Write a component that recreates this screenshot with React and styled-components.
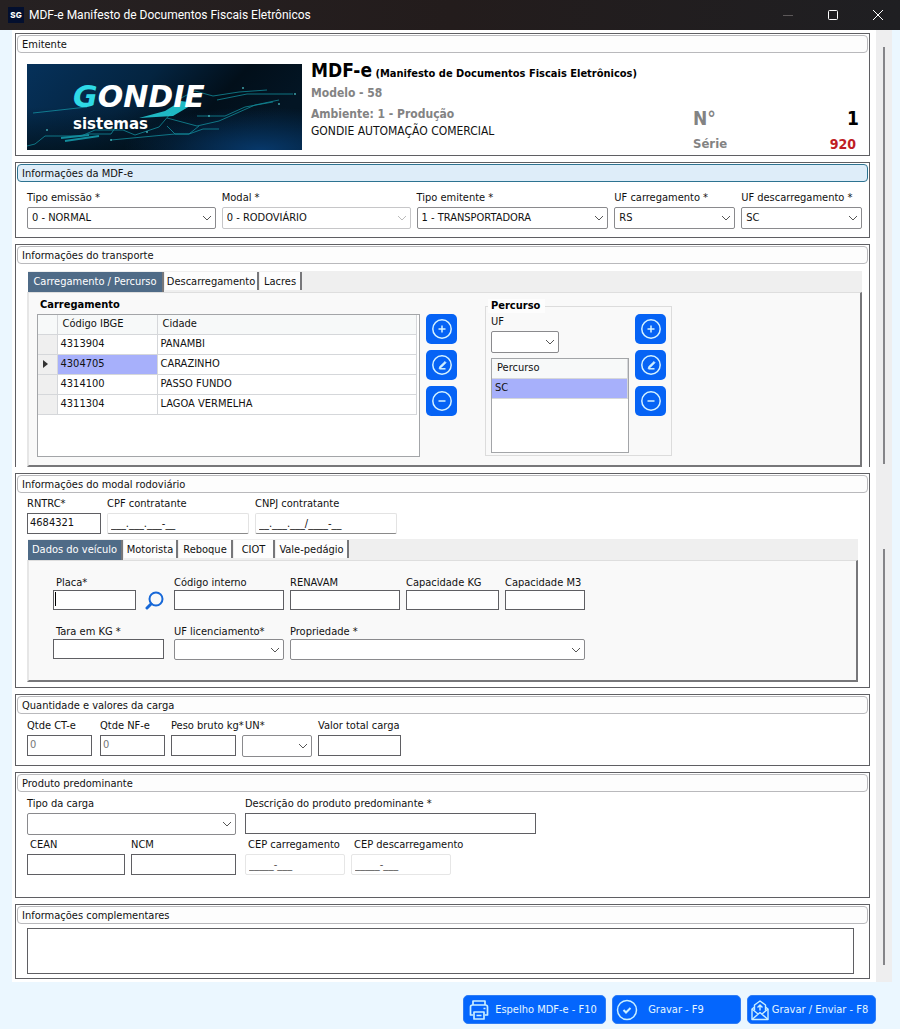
import React from "react";
import styled, { createGlobalStyle, css } from "styled-components";

const Global = createGlobalStyle`
  *, *::before, *::after { box-sizing: border-box; }
  body { margin: 0; background: #ebf7ff; }
  body, button, input, select, textarea {
    font-family: "DejaVu Sans Condensed", "DejaVu Sans", sans-serif;
    font-size: 11px;
    color: #111;
  }
`;

const Window = styled.div`
  min-height: 100vh;
  display: flex;
  flex-direction: column;
  background: #ebf7ff;
`;

const TitleBar = styled.header`
  display: flex;
  align-items: center;
  height: 30px;
  padding: 0 0 0 8px;
  background: linear-gradient(90deg, #262122, #231c1c 50%, #1f1f22);
`;

const AppIcon = styled.svg`
  width: 16px;
  height: 16px;
  margin-right: 5px;
`;

const Title = styled.h1`
  flex: 1;
  margin: 0;
  font: 400 12px Roboto, "Open Sans", sans-serif;
  color: #fff;
`;

const WindowButton = styled.button`
  width: 45px;
  height: 28px;
  padding: 0;
  border: 0;
  background: none;
  color: ${(p) => (p.disabled ? "#5c5859" : "#fff")};
  svg { display: block; margin: auto; }
`;

const Body = styled.div`
  flex: 1;
  display: flex;
  padding: 0 8px 0 12px;
`;

const Content = styled.main`
  flex: 1;
  min-width: 0;
  display: flex;
  flex-direction: column;
  gap: 6px;
  padding: 3px 6px 3px 3px;
  background: #fff;
`;

const ScrollBar = styled.div`
  width: 16px;
  display: flex;
  flex-direction: column;
  align-items: center;
  gap: 85px;
  padding: 17px 0;
  background: #eeeeef;
`;

const Thumb = styled.span`
  flex: 1;
  width: 2px;
  background: #858589;
`;

const Panel = styled.section`
  border: 1px solid #5f5f63;
  border-bottom-width: ${(p) => (p.$open ? "0" : "1px")};
  padding: 1px 1px ${(p) => p.$bottom}px;
`;

const PanelTitle = styled.h2`
  display: block;
  margin: 0;
  height: 18px;
  padding: 0 4px;
  border: 1px solid ${(p) => (p.$active ? "#2d7391" : "#b9b9bc")};
  border-radius: 4px;
  background: ${(p) => (p.$active ? "#deedf9" : "#fdfdfd")};
  font-size: 11px;
  font-weight: 400;
  line-height: 18px;
`;

const Emitter = styled.div`
  display: flex;
  align-items: flex-start;
  padding: 11px 9px 0 10px;
`;

const Banner = styled.svg`
  width: 275px;
  height: 86px;
  flex: none;
`;

const EmitterText = styled.div`
  flex: 1;
  padding-left: 9px;
  margin-top: -6px;
`;

const DocName = styled.p`
  margin: 0;
  height: 25px;
  font-size: 11px;
  font-weight: 700;
  line-height: 24px;
  color: #000;
  strong { font-size: 19px; }
`;

const Grey = styled.p`
  margin: 0;
  font-size: 12px;
  font-weight: 700;
  line-height: 21px;
  color: #838383;
`;

const Company = styled.p`
  margin: 0;
  font-size: 12px;
  line-height: 12px;
`;

const Numbers = styled.dl`
  display: grid;
  grid-template-columns: auto auto;
  grid-template-rows: 26px 24px;
  justify-content: space-between;
  width: 166px;
  margin: 41px 0 0;
  font-weight: 700;
  line-height: 26px;
  dt { font-size: 13px; color: #838383; }
  dd { margin: 0; font-size: 14px; text-align: right; padding-right: 3px; }
  dt.big, dd.big { font-size: 19px; }
  dd.big { color: #000; padding-right: 0; }
  dd.serie { color: #c01d24; }
`;

const Row = styled.div`
  display: ${(p) => (p.$cols ? "grid" : "flex")};
  grid-template-columns: ${(p) => p.$cols};
  align-items: ${(p) => (p.$end ? "end" : "start")};
  gap: 6px;
  padding: ${(p) => p.$pad || "0"};
  ${(p) => p.$tight && css`
    label { margin-bottom: 0; }
    input { height: 20px; }
    select { height: 21px; }
  `}
`;

const FieldBox = styled.div`
  width: ${(p) => (p.$w ? p.$w + "px" : "auto")};
  min-width: 0;
  display: flex;
  flex-direction: column;
  margin-right: ${(p) => p.$after || 0}px;
`;

const Label = styled.label`
  height: 14px;
  margin-bottom: 2px;
  padding-left: ${(p) => (p.$inset ? 3 : 0)}px;
  line-height: 14px;
  white-space: nowrap;
`;

const Input = styled.input`
  width: 100%;
  height: 21px;
  padding: 0 2px 3px;
  border: 1px solid #5f5f63;
  border-radius: 0;
  background: #fff;
  outline: 0;
  ${(p) => p.$mask && css`
    padding: 0 3px;
    border-color: #e3e3e3 #e3e3e3 #8a8a8a;
    border-radius: 2px;
  `}
  ${(p) => p.$faint && css`
    padding: 0 3px;
    border-color: #e6e6e6;
    border-radius: 2px;
    color: #555;
  `}
  ${(p) => p.$muted && css`color: #777;`}
`;

const Stack = styled.span`
  display: grid;
  > * { grid-area: 1 / 1; }
  > svg { align-self: center; justify-self: end; margin-right: 4px; pointer-events: none; }
`;

const Caret = styled.span`
  width: 1px;
  height: 14px;
  margin: 2px;
  background: #000;
`;

const Select = styled.select`
  appearance: none;
  width: 100%;
  height: 22px;
  padding: 0 18px 1px 4px;
  border: 1px solid #8a8a8d;
  border-radius: 2px;
  background: #fff;
  opacity: 1;
  &:disabled { border-color: #c6c6c8; color: #111; }
`;

const TabArea = styled.div`
  margin: ${(p) => p.$margin};
`;

const TabStrip = styled.div`
  display: flex;
  align-items: flex-start;
  gap: 1px;
  height: 21px;
  padding-top: 1px;
  margin-left: 1px;
  background: #efefef;
`;

const Tab = styled.button`
  height: 18px;
  width: ${(p) => p.$w}px;
  padding: 0;
  border: 0;
  border-right: 2px solid #77777a;
  background: #fdfdfd;
  font-size: 11px;
  line-height: 17px;
  text-align: center;
  white-space: nowrap;
  ${(p) => p.$on && css`
    height: 20px;
    line-height: 20px;
    background: #4f6b87;
    color: #fff;
  `}
`;

const TabPage = styled.div`
  display: flex;
  flex-direction: ${(p) => (p.$column ? "column" : "row")};
  align-items: flex-start;
  padding: ${(p) => p.$pad};
  border: 1px solid #dedede;
  border-left: 2px solid #e6e6e6;
  border-right: 2px solid #77777a;
  border-bottom: 2px solid #77777a;
  background: #f9f9f9;
`;

const Caption = styled.h3`
  margin: 0 0 2px 3px;
  font-size: 11px;
  line-height: 14px;
  font-weight: 700;
  color: #000;
`;

const GridBox = styled.div`
  width: ${(p) => p.$w}px;
  height: ${(p) => p.$h}px;
  border: 1px solid #a3a5a8;
  background: #fff;
`;

const Table = styled.table`
  width: ${(p) => (p.$full ? "100%" : "calc(100% - 2px)")};
  border-collapse: collapse;
  table-layout: fixed;
  th, td {
    height: 20px;
    padding: 0 3px;
    border: 1px solid #d5d7da;
    border-top: 0;
    border-left: 0;
    text-align: left;
    font-weight: 400;
    line-height: 18px;
  }
  thead th { height: 19px; padding: 0 5px; background: #f7f9f9; }
  tbody th { padding: 0; background: #efefef; }
  tbody th svg { display: block; margin: 0 5px; }
  td.selected { background: #a7b0fb; }
`;

const ButtonColumn = styled.div`
  display: flex;
  flex-direction: column;
  gap: 6px;
  padding: ${(p) => p.$pad};
`;

const IconButton = styled.button`
  display: grid;
  place-items: center;
  width: 31px;
  height: 30px;
  padding: 0;
  border: 0;
  border-radius: 5px;
  background: #0663f5;
`;

const Route = styled.fieldset`
  display: flex;
  gap: 6px;
  width: 187px;
  height: 157px;
  margin: 1px 0 0 28px;
  padding: 1px 5px 0;
  border: 1px solid #dcdcdc;
  legend {
    height: 14px;
    padding: 0 5px 0 3px;
    margin-left: -3px;
    background: #fdfdfd;
    font-weight: 700;
    line-height: 14px;
    color: #000;
  }
`;

const RouteFields = styled.div`
  display: flex;
  flex-direction: column;
  gap: 5px;
  padding-top: 1px;
`;

const SearchButton = styled.button`
  width: 20px;
  height: 20px;
  margin: 0 3px;
  padding: 0;
  border: 0;
  background: none;
  svg { display: block; }
`;

const Notes = styled.textarea`
  display: block;
  width: calc(100% - 24px);
  height: 46px;
  margin: 4px 14px 0 10px;
  border: 1px solid #5f5f63;
  border-radius: 0;
  background: #fff;
  resize: none;
`;

const Footer = styled.footer`
  display: flex;
  justify-content: flex-end;
  gap: 6px;
  padding: 13px 24px 5px;
`;

const Action = styled.button`
  display: flex;
  align-items: center;
  width: ${(p) => p.$w}px;
  height: 29px;
  padding: 0 ${(p) => (p.$centered ? 26 : 4)}px 0 3px;
  border: 1px solid #2f7df5;
  border-radius: 5px;
  background: #0466fd;
  color: #e6f7ff;
  span { flex: 1; text-align: center; white-space: nowrap; }
  svg { flex: none; }
`;

function Chevron({ faint }) {
  return (
    <svg width="10" height="6" viewBox="0 0 10 6" fill="none" stroke={faint ? "#bbb" : "#555"} aria-hidden="true">
      <path d="M1 1l4 4 4-4" />
    </svg>
  );
}

function Combo({ id, value = "", disabled }) {
  return (
    <Stack>
      <Select id={id} defaultValue={value} disabled={disabled}>
        <option value={value}>{value}</option>
      </Select>
      <Chevron faint={disabled} />
    </Stack>
  );
}

function Field({ id, label, w, after, inset, combo, value, disabled, caret, ...look }) {
  return (
    <FieldBox $w={w} $after={after}>
      <Label htmlFor={id} $inset={inset}>{label}</Label>
      {combo ? (
        <Combo id={id} value={value} disabled={disabled} />
      ) : caret ? (
        <Stack>
          <Input id={id} defaultValue={value} />
          <Caret />
        </Stack>
      ) : (
        <Input id={id} defaultValue={value} {...look} />
      )}
    </FieldBox>
  );
}

const glyphs = {
  Adicionar: <path d="M10 6.500v7M6.500 10h7" />,
  Editar: (
    <>
      <path d="M7.500 13.800h6" />
      <path d="M13 6.500l-5 4.800-1 2.200 2-.8 5-5z" fill="#d6f3ff" strokeWidth="0.800" />
    </>
  ),
  Remover: <path d="M6.500 10h7" />,
};

function EditButtons({ pad }) {
  return (
    <ButtonColumn $pad={pad}>
      {Object.entries(glyphs).map(([name, glyph]) => (
        <IconButton key={name} type="button" aria-label={name}>
          <svg width="20" height="20" viewBox="0 0 20 20" fill="none" stroke="#d6f3ff" strokeWidth="1.500">
            <circle cx="10" cy="10" r="9.200" />
            {glyph}
          </svg>
        </IconButton>
      ))}
    </ButtonColumn>
  );
}

function Tabs({ items }) {
  return (
    <TabStrip role="tablist">
      {items.map(([name, w], i) => (
        <Tab key={name} type="button" role="tab" aria-selected={i === 0} $on={i === 0} $w={w}>{name}</Tab>
      ))}
    </TabStrip>
  );
}

function Logo() {
  return (
    <Banner viewBox="0 0 275 86" role="img" aria-label="Gondie sistemas">
      <defs>
        <linearGradient id="sky" x1="0" y1="0" x2="1" y2="0.300">
          <stop offset="0" stopColor="#06315a" />
          <stop offset="0.450" stopColor="#042440" />
          <stop offset="0.750" stopColor="#020f1a" />
          <stop offset="1" stopColor="#031524" />
        </linearGradient>
        <radialGradient id="glow" cx="0.850" cy="1" r="0.500">
          <stop offset="0" stopColor="#07386a" />
          <stop offset="1" stopColor="#07386a" stopOpacity="0" />
        </radialGradient>
        <linearGradient id="shade" x1="0" y1="0" x2="0" y2="1">
          <stop offset="0.500" stopColor="#011019" stopOpacity="0" />
          <stop offset="1" stopColor="#011019" stopOpacity="0.700" />
        </linearGradient>
      </defs>
      <rect width="275" height="86" fill="url(#sky)" />
      <rect width="275" height="86" fill="url(#shade)" />
      <rect width="275" height="86" fill="url(#glow)" />
      <g fill="none" stroke="#17a9b8" strokeWidth="0.800" opacity="0.800">
        <path d="M0 82l8-2 10-8h36l14-6h28l12 5 24-8 12-14" />
        <path d="M34 74l28-3M38 77l34-5" strokeWidth="2" />
        <path d="M84 76l64-6h14l14-5h16" />
        <path d="M6 49l54-6M60 70h24l8-12M150 36l18-9 18 5 26-4 28-2M190 36l30-6h46" />
        <path d="M140 54l30 8 22-5 36-16 24-5M170 52h28l20-9 28-5M140 62l8 8h14l10-8" />
      </g>
      <path d="M112 54l26-7 16-10 14 2-22 13z" fill="#22cbd5" opacity="0.900" />
      <g fill="#58dce2" opacity="0.700">
        <circle cx="268" cy="30" r="1" />
        <circle cx="120" cy="68" r="1" />
        <circle cx="84" cy="76" r="1" />
        <circle cx="182" cy="52" r="1" />
        <circle cx="216" cy="24" r="1" />
        <circle cx="20" cy="66" r="1" />
        <circle cx="252" cy="40" r="1" />
      </g>
      <text x="46" y="43" fontFamily="'DejaVu Sans', sans-serif" fontWeight="700" fontStyle="italic" fontSize="30" fill="#fff">
        <tspan fill="#2fd9e6">G</tspan>ONDIE
      </text>
      <text x="46" y="65" fontFamily="'DejaVu Sans', sans-serif" fontWeight="700" fontSize="15" fill="#fff">sistemas</text>
    </Banner>
  );
}

const cities = [
  ["4313904", "PANAMBI"],
  ["4304705", "CARAZINHO"],
  ["4314100", "PASSO FUNDO"],
  ["4311304", "LAGOA VERMELHA"],
];

export default function App() {
  return (
    <Window>
      <Global />
      <TitleBar>
        <AppIcon viewBox="0 0 16 16" aria-hidden="true">
          <rect width="16" height="16" fill="#030f2e" />
          <text x="8" y="11" textAnchor="middle" fontFamily="Inter, sans-serif" fontWeight="800" fontSize="8" fill="#fff">SG</text>
        </AppIcon>
        <Title>MDF-e Manifesto de Documentos Fiscais Eletrônicos</Title>
        <WindowButton type="button" aria-label="Minimizar" disabled>
          <svg width="10" height="10" stroke="currentColor"><path d="M0 5.500h10" /></svg>
        </WindowButton>
        <WindowButton type="button" aria-label="Maximizar">
          <svg width="10" height="10" fill="none" stroke="currentColor"><rect x="0.500" y="0.500" width="9" height="9" rx="1" /></svg>
        </WindowButton>
        <WindowButton type="button" aria-label="Fechar">
          <svg width="10" height="10" stroke="currentColor"><path d="M0 0l10 10M10 0L0 10" /></svg>
        </WindowButton>
      </TitleBar>

      <Body>
        <Content>
          <Panel $bottom={0}>
            <PanelTitle>Emitente</PanelTitle>
            <Emitter>
              <Logo />
              <EmitterText>
                <DocName><strong>MDF-e</strong> (Manifesto de Documentos Fiscais Eletrônicos)</DocName>
                <Grey>Modelo - 58</Grey>
                <Grey>Ambiente: 1 - Produção</Grey>
                <Company>GONDIE AUTOMAÇÃO COMERCIAL</Company>
              </EmitterText>
              <Numbers>
                <dt className="big">N°</dt>
                <dd className="big">1</dd>
                <dt>Série</dt>
                <dd className="serie">920</dd>
              </Numbers>
            </Emitter>
          </Panel>

          <Panel $bottom={8}>
            <PanelTitle $active>Informações da MDF-e</PanelTitle>
            <Row $cols="189fr 189fr 192fr 121fr 121fr" $pad="9px 6px 0 10px">
              <Field combo id="tipoEmissao" label="Tipo emissão *" value="0 - NORMAL" />
              <Field combo id="modal" label="Modal *" value="0 - RODOVIÁRIO" disabled />
              <Field combo id="tipoEmitente" label="Tipo emitente *" value="1 - TRANSPORTADORA" />
              <Field combo id="ufCarga" label="UF carregamento *" value="RS" />
              <Field combo id="ufDescarga" label="UF descarregamento *" value="SC" />
            </Row>
          </Panel>

          <Panel $bottom={0} $open>
            <PanelTitle>Informações do transporte</PanelTitle>
            <TabArea $margin="7px 6px 0 10px">
              <Tabs items={[["Carregamento / Percurso", 136], ["Descarregamento", 94], ["Lacres", 42]]} />
              <TabPage $pad="5px 8px 8px">
                <div>
                  <Caption>Carregamento</Caption>
                  <GridBox $w={383} $h={143}>
                    <Table>
                      <colgroup>
                        <col width="19" />
                        <col width="100" />
                        <col />
                      </colgroup>
                      <thead>
                        <tr><th aria-label="Linha atual" /><th>Código IBGE</th><th>Cidade</th></tr>
                      </thead>
                      <tbody>
                        {cities.map(([code, city], i) => (
                          <tr key={code}>
                            <th>{i === 1 && <svg width="5" height="8"><path d="M0 0l5 4-5 4z" fill="#333" /></svg>}</th>
                            <td className={i === 1 ? "selected" : undefined}>{code}</td>
                            <td>{city}</td>
                          </tr>
                        ))}
                      </tbody>
                    </Table>
                  </GridBox>
                </div>
                <EditButtons pad="16px 0 0 6px" />
                <Route>
                  <legend>Percurso</legend>
                  <RouteFields>
                    <Field combo id="ufPercurso" label="UF" w={68} />
                    <GridBox $w={138} $h={95}>
                      <Table $full>
                        <thead><tr><th>Percurso</th></tr></thead>
                        <tbody><tr><td className="selected">SC</td></tr></tbody>
                      </Table>
                    </GridBox>
                  </RouteFields>
                  <EditButtons pad="0" />
                </Route>
              </TabPage>
            </TabArea>
          </Panel>

          <Panel $bottom={5}>
            <PanelTitle>Informações do modal rodoviário</PanelTitle>
            <Row $pad="4px 10px 0">
              <Field id="rntrc" label="RNTRC*" w={74} value="4684321" />
              <Field id="cpf" label="CPF contratante" w={142} value="___.___.___-__" $mask />
              <Field id="cnpj" label="CNPJ contratante" w={142} value="__.___.___/____-__" $mask />
            </Row>
            <TabArea $margin="5px 10px 0 10px">
              <Tabs items={[["Dados do veículo", 95], ["Motorista", 54], ["Reboque", 54], ["CIOT", 41], ["Vale-pedágio", 73]]} />
              <TabPage $column $pad="15px 20px 20px 24px">
                <Row $tight $end>
                  <Field id="placa" label="Placa*" w={83} inset caret />
                  <SearchButton type="button" aria-label="Pesquisar placa">
                    <svg width="20" height="20" viewBox="0 0 20 20" fill="none" stroke="#1768d8">
                      <circle cx="11" cy="9" r="6.500" strokeWidth="2" />
                      <path d="M6 14L2 18" strokeWidth="3" strokeLinecap="round" />
                    </svg>
                  </SearchButton>
                  <Field id="codInterno" label="Código interno" w={110} />
                  <Field id="renavam" label="RENAVAM" w={110} />
                  <Field id="capKg" label="Capacidade KG" w={93} />
                  <Field id="capM3" label="Capacidade M3" w={80} />
                </Row>
                <Row $tight $pad="15px 0 0">
                  <Field id="tara" label="Tara em KG *" w={111} after={4} inset />
                  <Field combo id="ufLic" label="UF licenciamento*" w={110} />
                  <Field combo id="propriedade" label="Propriedade *" w={295} />
                </Row>
              </TabPage>
            </TabArea>
          </Panel>

          <Panel $bottom={8}>
            <PanelTitle>Quantidade e valores da carga</PanelTitle>
            <Row $pad="5px 10px 0">
              <Field id="qtdCte" label="Qtde CT-e" w={65} after={2} value="0" $muted />
              <Field id="qtdNfe" label="Qtde NF-e" w={65} value="0" $muted />
              <Field id="peso" label="Peso bruto kg*" w={65} />
              <Field combo id="un" label="UN*" w={70} inset />
              <Field id="valor" label="Valor total carga" w={83} />
            </Row>
          </Panel>

          <Panel $bottom={22}>
            <PanelTitle>Produto predominante</PanelTitle>
            <Row $pad="5px 10px 0">
              <Field combo id="tipoCarga" label="Tipo da carga" w={209} after={3} />
              <Field id="descricao" label="Descrição do produto predominante *" w={291} />
            </Row>
            <Row $pad="3px 10px 0">
              <Field id="cean" label="CEAN" w={98} inset />
              <Field id="ncm" label="NCM" w={105} after={3} />
              <Field id="cepCarga" label="CEP carregamento" w={100} inset value="_____-___" $faint />
              <Field id="cepDescarga" label="CEP descarregamento" w={100} inset value="_____-___" $faint />
            </Row>
          </Panel>

          <Panel $bottom={4}>
            <PanelTitle as="label" htmlFor="complementares">Informações complementares</PanelTitle>
            <Notes id="complementares" />
          </Panel>
        </Content>
        <ScrollBar aria-hidden="true">
          <Thumb />
          <Thumb />
        </ScrollBar>
      </Body>

      <Footer>
        <Action type="button" $w={143}>
          <svg width="24" height="24" viewBox="0 0 24 24" fill="none" stroke="#c9efff" strokeWidth="1.700" strokeLinejoin="round">
            <path d="M6 7V3h12v4M6 17H3.500V9q0-2 2-2h13q2 0 2 2v8H18" />
            <path d="M7 14h10v7H7zM9.500 17.500h5M16.500 10.500h2" />
          </svg>
          <span>Espelho MDF-e - F10</span>
        </Action>
        <Action type="button" $w={129} $centered>
          <svg width="22" height="22" viewBox="0 0 22 22" fill="none" stroke="#c9efff" strokeWidth="1.500">
            <circle cx="11" cy="11" r="9.500" />
            <path d="M7.500 11l2.500 2.500 4.500-4.500" strokeWidth="2" />
          </svg>
          <span>Gravar - F9</span>
        </Action>
        <Action type="button" $w={129}>
          <svg width="18" height="22" viewBox="0 0 18 22" fill="none" stroke="#c9efff" strokeWidth="1.400" strokeLinejoin="round">
            <path d="M3.500 11.500V6L9 2l5.500 4v5.500M3.500 8L1 10v10.500h16V10l-2.500-2" />
            <path d="M1 10l6 5M17 10l-6 5M1 20.500L9 13.500l8 7" />
            <path d="M9 11.500V7M6.500 8.500L9 6l2.500 2.500" />
          </svg>
          <span>Gravar / Enviar - F8</span>
        </Action>
      </Footer>
    </Window>
  );
}
